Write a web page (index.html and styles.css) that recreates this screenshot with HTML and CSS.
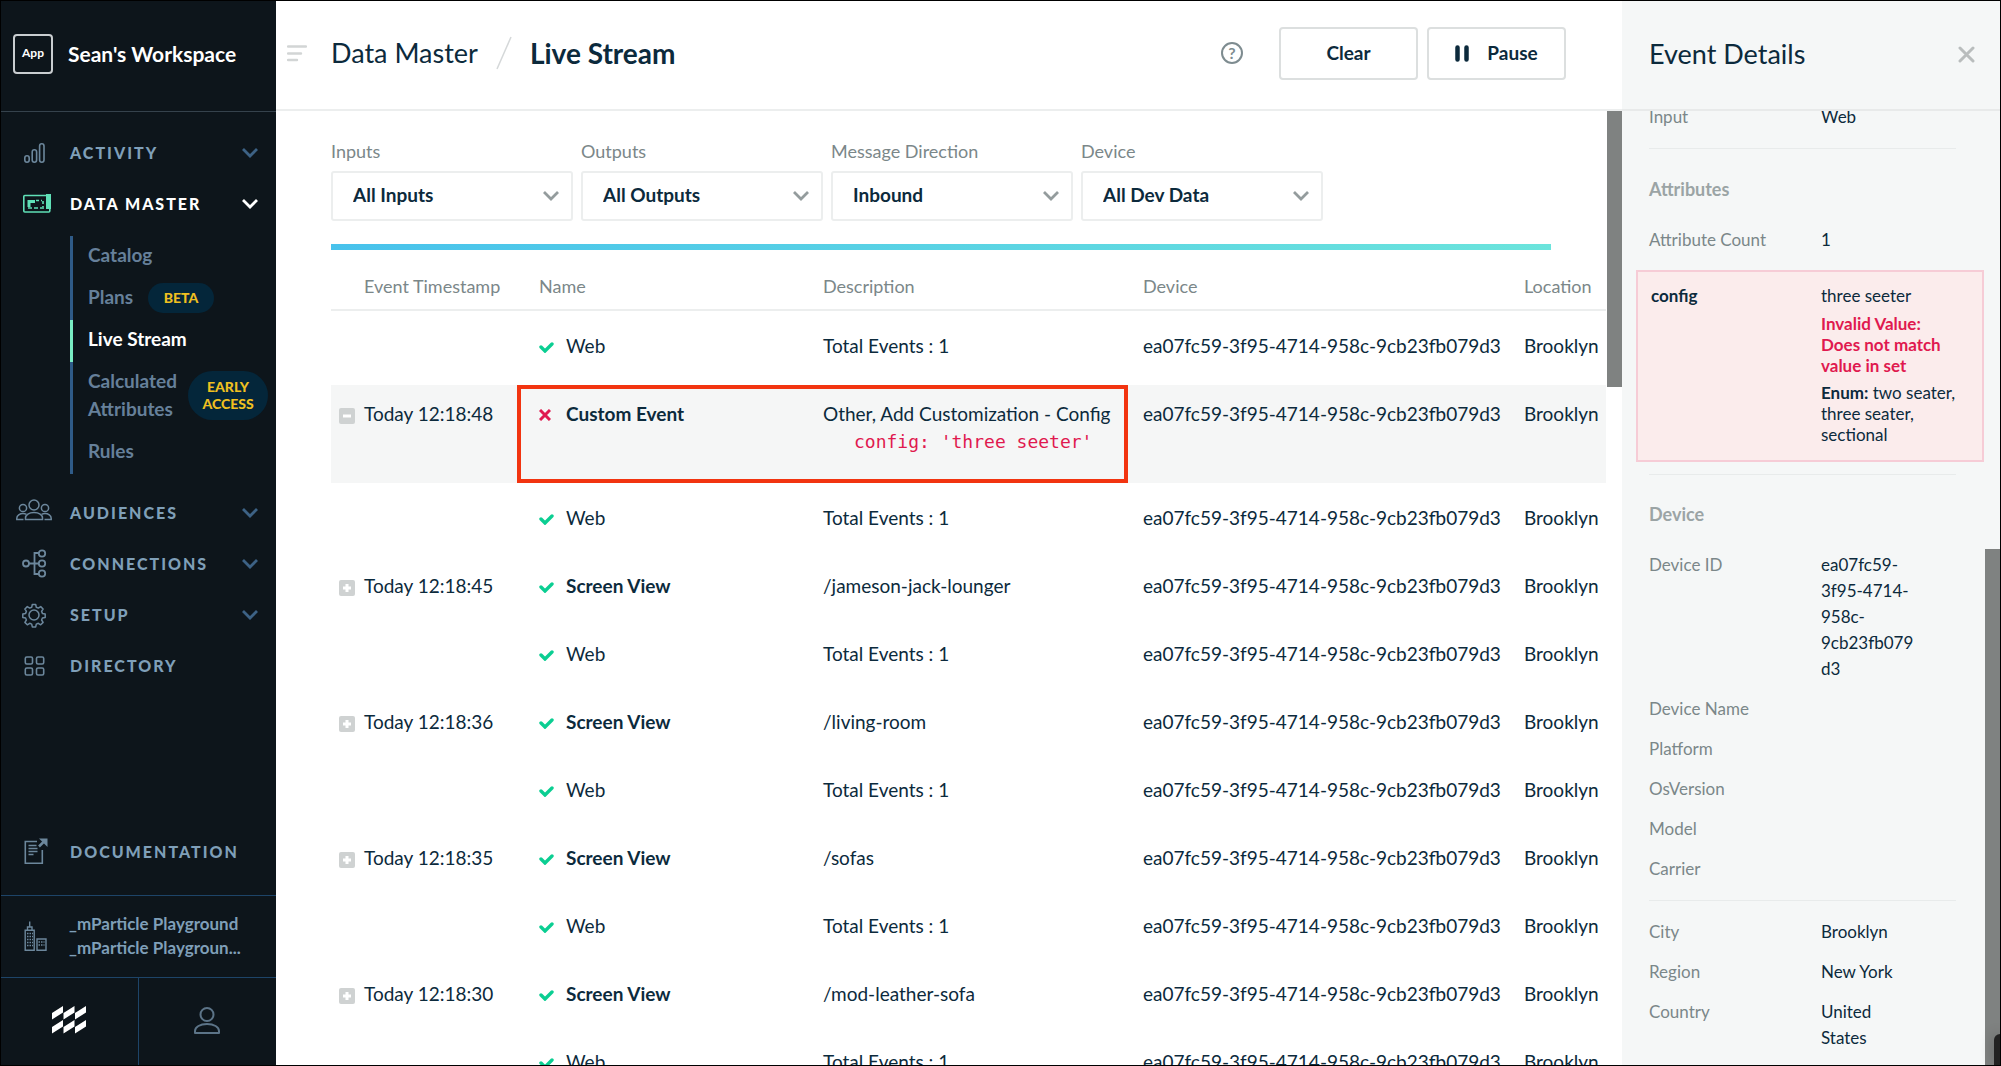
FILE: index.html
```
<!DOCTYPE html>
<html lang="en">
  <head>
    <meta charset="utf-8">
    <title>Live Stream</title>
    <link rel="stylesheet" href="styles.css">
  </head>
<body>
  <!--Shared icons-->
  <svg class="defs" width="0" height="0">
    <symbol id="chevron" viewBox="0 0 18 12"><path d="M2 2l7 7 7-7" fill="none" stroke="currentColor" stroke-width="2.8"/></symbol>
    <symbol id="check" viewBox="0 0 15 12"><path d="M2 6l4 4 7-7" fill="none" stroke="currentColor" stroke-width="3.4" stroke-linecap="round"/></symbol>
    <symbol id="cross" viewBox="0 0 12 12"><path d="M1 1l10 10M11 1L1 11" fill="none" stroke="currentColor" stroke-width="3"/></symbol>
    <symbol id="plus" viewBox="0 0 16 16"><path d="M8 4v8M4 8h8" fill="none" stroke="currentColor" stroke-width="3"/></symbol>
    <symbol id="minus" viewBox="0 0 16 16"><path d="M4 8h8" fill="none" stroke="currentColor" stroke-width="3"/></symbol>
  </svg>

  <aside class="sidebar">
    <div class="brand">
      <span class="app">App</span>
      <span class="workspace">Sean's Workspace</span>
    </div>
    <nav class="nav">
      <a class="item" href="#">
        <svg class="icon" width="36" height="30" viewBox="0 0 36 30"><g fill="none" stroke="currentColor" stroke-width="1.6"><rect x="8.8" y="17.8" width="4.4" height="6.4" rx="2.2"/><rect x="16.2" y="11.8" width="4.4" height="12.4" rx="2.2"/><rect x="23.6" y="5.8" width="4.4" height="18.4" rx="2.2"/></g></svg>
        <span>ACTIVITY</span>
        <svg class="arrow" width="18" height="12"><use href="#chevron"/></svg>
      </a>
      <a class="item open" href="#">
        <svg class="icon" width="36" height="30" viewBox="0 0 36 30"><g fill="none" stroke="#5fe0b7"><rect x="7.8" y="6.5" width="26" height="16.500" rx="1" stroke-width="1.6"/><path d="M13 18v-5.500h6" stroke-width="3"/><path d="M12 19h16" stroke-width="1.600" stroke-dasharray="4 2"/><path d="M20 11.500h6M27 12v6" stroke-width="1.600" stroke-dasharray="3 2"/></g><path d="M30 5h5v15h-5z" fill="#5fe0b7"/></svg>
        <span>DATA MASTER</span>
        <svg class="arrow" width="18" height="12"><use href="#chevron"/></svg>
      </a>
      <div class="submenu">
        <a href="#">Catalog</a>
        <a href="#">Plans <span class="badge beta">BETA</span></a>
        <a class="active" href="#">Live Stream</a>
        <a href="#">Calculated<br>Attributes <span class="badge early">EARLY ACCESS</span></a>
        <a href="#">Rules</a>
      </div>
      <a class="item" href="#">
        <svg class="icon" width="36" height="30" viewBox="0 0 36 30"><g fill="none" stroke="currentColor" stroke-width="1.5"><circle cx="18" cy="7" r="5"/><circle cx="7" cy="10" r="3.600"/><circle cx="29" cy="10" r="3.600"/><path d="M9.500 21.500v-1.500c0-3 3.500-5.500 8.500-5.500s8.500 2.500 8.500 5.500v1.500z"/><path d="M7.500 21.500H.8v-1.300c0-2.700 3-4.700 6.200-4.700 1.400 0 2.500.3 3.500.8M28.500 21.500h6.700v-1.300c0-2.700-3-4.700-6.200-4.700-1.400 0-2.500.3-3.500.8"/></g></svg>
        <span>AUDIENCES</span>
        <svg class="arrow" width="18" height="12"><use href="#chevron"/></svg>
      </a>
      <a class="item" href="#">
        <svg class="icon" width="36" height="30" viewBox="0 0 36 30"><g fill="none" stroke="currentColor" stroke-width="1.8"><circle cx="10" cy="14.500" r="3"/><circle cx="26" cy="4.500" r="3.200"/><circle cx="26" cy="14.500" r="3.200"/><circle cx="26" cy="24.500" r="3.200"/><path d="M13 14.500h10M23 4h-4.500v21h4.500"/></g></svg>
        <span>CONNECTIONS</span>
        <svg class="arrow" width="18" height="12"><use href="#chevron"/></svg>
      </a>
      <a class="item" href="#">
        <svg class="icon" width="36" height="30" viewBox="0 0 36 30"><g fill="none" stroke="currentColor" stroke-width="1.5"><circle cx="18" cy="15" r="5"/><path stroke-linejoin="round" d="M16.300 4.500h3.400l.6 2.800 2 .8 2.400-1.500 2.400 2.400-1.500 2.400.8 2 2.800.6v3.400l-2.800.6-.8 2 1.500 2.400-2.400 2.400-2.400-1.500-2 .8-.6 2.800h-3.400l-.6-2.800-2-.8-2.400 1.500-2.400-2.400 1.500-2.400-.8-2-2.800-.6v-3.400l2.800-.6.8-2-1.500-2.400 2.400-2.400 2.400 1.500 2-.8z"/></g></svg>
        <span>SETUP</span>
        <svg class="arrow" width="18" height="12"><use href="#chevron"/></svg>
      </a>
      <a class="item" href="#">
        <svg class="icon" width="36" height="30" viewBox="0 0 36 30"><g fill="none" stroke="currentColor" stroke-width="1.6"><rect x="9.300" y="6" width="7.200" height="7" rx="1.500"/><rect x="20.500" y="6" width="7.200" height="7" rx="1.500"/><rect x="9.300" y="17" width="7.200" height="7" rx="1.500"/><rect x="20.500" y="17" width="7.200" height="7" rx="1.500"/></g></svg>
        <span>DIRECTORY</span>
      </a>
    </nav>
    <a class="item docs" href="#">
      <svg class="icon" width="36" height="30" viewBox="0 0 36 30"><g fill="none" stroke="currentColor" stroke-width="1.600"><path d="M21 4.500H9.300v21.700h17V13"/><path d="M12.500 8.500h8M12.500 11.500h9M12.500 14.500h9M12.500 17.500h5"/><path d="M23 9.500l5-5" stroke-width="2.500"/></g><path d="M23 1.500h8.500v8.500z" fill="currentColor"/></svg>
      <span>DOCUMENTATION</span>
    </a>
    <a class="account" href="#">
      <svg class="icon" width="36" height="32" viewBox="0 0 36 32"><g fill="none" stroke="currentColor" stroke-width="1.400"><path d="M9.200 30.300v-20h9v20zM21 30.300V19h9v11.300zM11.500 10v-3h4.500v3M13.700 7V1.500"/><path d="M11 13.500h6M11 16.500h6M11 19.500h6M11 22.500h6M11 25.500h6M22.500 22h6M22.500 25h6" stroke-dasharray="1.500 1"/></g></svg>
      <span class="names"><span>_mParticle Playground</span><span>_mParticle Playgroun...</span></span>
    </a>
    <div class="bottom">
      <a href="#" aria-label="Home">
        <svg width="36" height="30" viewBox="0 0 36 30"><path fill="#fff" d="M1 8L12 1v6.500L1 14.500zM12.500 8L23.500 1v6.500l-11 7zM24 8L35 1v6.500l-11 7zM1 22L12 15v6.500L1 28.500zM12.500 22L23.500 15v6.500l-11 7zM24 22L35 15v6.500l-11 7z"/></svg>
      </a>
      <a href="#" aria-label="Profile">
        <svg width="28" height="30" viewBox="0 0 28 30"><g fill="none" stroke="#5c7488" stroke-width="2"><circle cx="14" cy="9.500" r="6.500"/><path d="M2 28v-2c0-4 5-7 12-7s12 3 12 7v2z" stroke-linejoin="round"/></g></svg>
      </a>
    </div>
  </aside>

  <main class="main">
    <header class="header">
      <svg class="menu" width="20" height="18" viewBox="0 0 20 18"><path d="M1 2.500h18M1 9.500h13M1 16h9" stroke="#d2d5d5" stroke-width="2.400" stroke-linecap="round"/></svg>
      <h1 class="title">Data Master</h1>
      <svg class="slash" width="16" height="34" viewBox="0 0 16 34"><path d="M15 1L1 33" stroke="#d5d8d9" stroke-width="1.500"/></svg>
      <h1 class="title current">Live Stream</h1>
      <span class="help">?</span>
      <button class="btn">Clear</button>
      <button class="btn"><svg width="14" height="17" viewBox="0 0 14 17"><path d="M2.500 2.500v12M11.500 2.500v12" stroke="currentColor" stroke-width="4.500" stroke-linecap="round"/></svg>Pause</button>
    </header>

    <div class="content">
      <form class="filters">
        <div class="filter">
          <label for="inputs">Inputs</label>
          <select id="inputs"><option>All Inputs</option></select>
          <svg class="drop" width="18" height="12"><use href="#chevron"/></svg>
        </div>
        <div class="filter">
          <label for="outputs">Outputs</label>
          <select id="outputs"><option>All Outputs</option></select>
          <svg class="drop" width="18" height="12"><use href="#chevron"/></svg>
        </div>
        <div class="filter">
          <label for="direction">Message Direction</label>
          <select id="direction"><option>Inbound</option></select>
          <svg class="drop" width="18" height="12"><use href="#chevron"/></svg>
        </div>
        <div class="filter">
          <label for="device">Device</label>
          <select id="device"><option>All Dev Data</option></select>
          <svg class="drop" width="18" height="12"><use href="#chevron"/></svg>
        </div>
      </form>
      <div class="progress"></div>

      <table class="events">
        <thead>
          <tr><th class="time">Event Timestamp</th><th class="name">Name</th><th class="desc">Description</th><th class="dev">Device</th><th class="loc">Location</th></tr>
        </thead>
        <tbody>
          <tr class="child"><td></td><td><svg class="ok" width="15" height="12"><use href="#check"/></svg>Web</td><td>Total Events : 1</td><td>ea07fc59-3f95-4714-958c-9cb23fb079d3</td><td>Brooklyn</td></tr>
          <tr class="invalid"><td><button class="toggle" aria-label="Collapse"><svg width="16" height="16"><use href="#minus"/></svg></button>Today 12:18:48</td><td><svg class="bad" width="12" height="12"><use href="#cross"/></svg><b>Custom Event</b></td><td>Other, Add Customization - Config<code>config: 'three seeter'</code></td><td>ea07fc59-3f95-4714-958c-9cb23fb079d3</td><td>Brooklyn</td></tr>
          <tr class="child"><td></td><td><svg class="ok" width="15" height="12"><use href="#check"/></svg>Web</td><td>Total Events : 1</td><td>ea07fc59-3f95-4714-958c-9cb23fb079d3</td><td>Brooklyn</td></tr>
          <tr><td><button class="toggle" aria-label="Expand"><svg width="16" height="16"><use href="#plus"/></svg></button>Today 12:18:45</td><td><svg class="ok" width="15" height="12"><use href="#check"/></svg><b>Screen View</b></td><td>/jameson-jack-lounger</td><td>ea07fc59-3f95-4714-958c-9cb23fb079d3</td><td>Brooklyn</td></tr>
          <tr class="child"><td></td><td><svg class="ok" width="15" height="12"><use href="#check"/></svg>Web</td><td>Total Events : 1</td><td>ea07fc59-3f95-4714-958c-9cb23fb079d3</td><td>Brooklyn</td></tr>
          <tr><td><button class="toggle" aria-label="Expand"><svg width="16" height="16"><use href="#plus"/></svg></button>Today 12:18:36</td><td><svg class="ok" width="15" height="12"><use href="#check"/></svg><b>Screen View</b></td><td>/living-room</td><td>ea07fc59-3f95-4714-958c-9cb23fb079d3</td><td>Brooklyn</td></tr>
          <tr class="child"><td></td><td><svg class="ok" width="15" height="12"><use href="#check"/></svg>Web</td><td>Total Events : 1</td><td>ea07fc59-3f95-4714-958c-9cb23fb079d3</td><td>Brooklyn</td></tr>
          <tr><td><button class="toggle" aria-label="Expand"><svg width="16" height="16"><use href="#plus"/></svg></button>Today 12:18:35</td><td><svg class="ok" width="15" height="12"><use href="#check"/></svg><b>Screen View</b></td><td>/sofas</td><td>ea07fc59-3f95-4714-958c-9cb23fb079d3</td><td>Brooklyn</td></tr>
          <tr class="child"><td></td><td><svg class="ok" width="15" height="12"><use href="#check"/></svg>Web</td><td>Total Events : 1</td><td>ea07fc59-3f95-4714-958c-9cb23fb079d3</td><td>Brooklyn</td></tr>
          <tr><td><button class="toggle" aria-label="Expand"><svg width="16" height="16"><use href="#plus"/></svg></button>Today 12:18:30</td><td><svg class="ok" width="15" height="12"><use href="#check"/></svg><b>Screen View</b></td><td>/mod-leather-sofa</td><td>ea07fc59-3f95-4714-958c-9cb23fb079d3</td><td>Brooklyn</td></tr>
          <tr class="child"><td></td><td><svg class="ok" width="15" height="12"><use href="#check"/></svg>Web</td><td>Total Events : 1</td><td>ea07fc59-3f95-4714-958c-9cb23fb079d3</td><td>Brooklyn</td></tr>
        </tbody>
      </table>
      <div class="scrollbar top"></div>
    </div>
  </main>

  <aside class="details">
    <header class="details-header">
      <h2 class="title">Event Details</h2>
      <button class="close" aria-label="Close"><svg width="17" height="17" viewBox="0 0 17 17"><path d="M2 2l13 13M15 2L2 15" stroke="#b9bdbd" stroke-width="3" stroke-linecap="round"/></svg></button>
    </header>
    <div class="details-body">
      <dl class="group first">
        <dt>Input</dt><dd>Web</dd>
      </dl>
      <h3>Attributes</h3>
      <dl class="group">
        <dt>Attribute Count</dt><dd>1</dd>
      </dl>
      <dl class="error">
        <dt>config</dt>
        <dd>three seeter
          <p class="invalid-value">Invalid Value: Does not match value in set</p>
          <p><b>Enum:</b> two seater, three seater, sectional</p>
        </dd>
      </dl>
      <h3 class="ruled">Device</h3>
      <dl class="group">
        <dt>Device ID</dt><dd>ea07fc59-3f95-4714-958c-9cb23fb079d3</dd>
        <dt>Device Name</dt><dd></dd>
        <dt>Platform</dt><dd></dd>
        <dt>OsVersion</dt><dd></dd>
        <dt>Model</dt><dd></dd>
        <dt>Carrier</dt><dd></dd>
      </dl>
      <dl class="group place">
        <dt>City</dt><dd>Brooklyn</dd>
        <dt>Region</dt><dd>New York</dd>
        <dt>Country</dt><dd>United States</dd>
      </dl>
      <div class="scrollbar low"></div>
      <div class="corner"></div>
    </div>
  </aside>
</body>
</html>
```

FILE: styles.css
```
* {
  box-sizing: border-box;
}
body {
  margin: 0;
  height: 100vh;
  display: flex;
  overflow: hidden;
  border: 1px solid #000;
  background-color: #fff;
  color: #0c2a3c;
  font-family: Lato, "Liberation Sans", sans-serif;
  font-size: 19px;
  line-height: 28px;
}
a {
  color: inherit;
  text-decoration: none;
}
h1, h2, h3, p, dl, dd {
  margin: 0;
}
button, select {
  font: inherit;
  color: inherit;
}
.defs {
  position: absolute;
}

/* sidebar */
.sidebar {
  width: 275px;
  flex-shrink: 0;
  display: flex;
  flex-direction: column;
  background-color: #0d151b;
  color: #7f9fb8;
  font-weight: bold;
}
.brand {
  height: 111px;
  padding: 0 12px 5px;
  display: flex;
  align-items: center;
  gap: 15px;
  flex-shrink: 0;
  border-bottom: 1px solid #35424c;
  color: #fff;
  font-size: 21px;
}
.app {
  width: 40px;
  height: 40px;
  border: 2px solid #c9cdd0;
  border-radius: 4px;
  font-size: 12px;
  line-height: 34px;
  text-align: center;
}
.nav {
  flex: 1;
  padding-top: 15px;
}
.item {
  height: 51px;
  padding: 0 17px 0 15px;
  display: flex;
  align-items: center;
  gap: 18px;
  font-size: 16px;
  font-weight: 900;
  letter-spacing: 2px;
}
.icon {
  flex-shrink: 0;
  color: #6c879c;
}
.arrow {
  margin-left: auto;
  color: #3d6285;
}
.open, .open .arrow {
  color: #fff;
}
.submenu {
  margin: 7px 0 13px 69px;
  color: #66809a;
}
.submenu a {
  position: relative;
  display: block;
  padding: 5px 0 9px 15px;
  border-left: 3px solid #2f5b88;
  font-size: 19px;
}
.submenu .active {
  border-left-color: #79ecc4;
  color: #fff;
}
.badge {
  position: absolute;
  border-radius: 25px;
  background-color: #04263a;
  color: #f0c020;
  font-size: 14px;
  font-weight: 900;
  text-align: center;
}
.beta {
  top: 5px;
  left: 75px;
  width: 66px;
  line-height: 30px;
}
.early {
  top: 9px;
  left: 115px;
  width: 80px;
  padding: 7px 10px 8px;
  line-height: 17px;
}
.docs {
  margin-bottom: 18px;
}
.account {
  height: 82px;
  padding: 0 15px 2px;
  display: flex;
  align-items: center;
  gap: 17px;
  flex-shrink: 0;
  border-top: 1px solid #1d4468;
  font-size: 17px;
  line-height: 24px;
}
.names span {
  display: block;
  white-space: nowrap;
}
.bottom {
  height: 88px;
  display: flex;
  flex-shrink: 0;
  border-top: 1px solid #1d4468;
}
.bottom a {
  flex: 1;
  display: flex;
  align-items: center;
  justify-content: center;
  padding: 0 2px 4px 0;
}
.bottom a + a {
  border-left: 1px solid #1d4468;
}

/* main area */
.main {
  flex: 1;
  min-width: 0;
  display: flex;
  flex-direction: column;
}
.header {
  height: 110px;
  padding: 0 56px 4px 11px;
  display: flex;
  align-items: center;
  flex-shrink: 0;
  border-bottom: 2px solid #eceeee;
}
.title {
  font-size: 27px;
  font-weight: normal;
  line-height: 32px;
  white-space: nowrap;
}
.menu {
  margin-right: 24px;
}
.slash {
  margin: 0 18px;
}
.current {
  font-size: 28px;
  font-weight: bold;
}
.help {
  width: 22px;
  height: 22px;
  margin-left: auto;
  margin-right: 36px;
  border: 2px solid #7e8c90;
  border-radius: 50%;
  color: #7e8c90;
  font-size: 16px;
  font-weight: bold;
  line-height: 18px;
  text-align: center;
}
.btn {
  width: 139px;
  height: 53px;
  display: flex;
  align-items: center;
  justify-content: center;
  gap: 18px;
  border: 2px solid #dcdfdf;
  border-radius: 4px;
  background-color: #fff;
  font-weight: bold;
}
.btn + .btn {
  margin-left: 9px;
}
.content {
  position: relative;
  flex: 1;
  overflow: hidden;
  padding: 26px 16px 0 55px;
}
.filters {
  display: flex;
  gap: 8px;
}
.filter {
  position: relative;
  width: 242px;
}
.filter label {
  display: block;
  margin-bottom: 6px;
  color: #7b8789;
  font-size: 18px;
}
.filter select {
  width: 100%;
  height: 50px;
  padding: 0 20px 2px;
  appearance: none;
  border: 2px solid #eceeee;
  border-radius: 3px;
  background-color: #fff;
  font-weight: bold;
}
.drop {
  position: absolute;
  right: 13px;
  bottom: 19px;
  color: #949c9d;
  pointer-events: none;
}
.progress {
  height: 6px;
  margin: 23px 55px 0 0;
  background: linear-gradient(to right, #48c2ec, #6be4dc);
}
.events {
  width: 100%;
  table-layout: fixed;
  border-spacing: 0;
}
.events th {
  height: 61px;
  padding: 22px 0 0 22px;
  border-bottom: 2px solid #eceeee;
  color: #7b8789;
  font-size: 18px;
  font-weight: normal;
  line-height: 28px;
  text-align: left;
  vertical-align: top;
  white-space: nowrap;
}
.events td {
  padding: 15px 0 19px 22px;
  height: 62px;
  vertical-align: top;
  white-space: nowrap;
}
.events .child td {
  padding-top: 21px;
  height: 74px;
}
.events th:first-child, .events td:first-child {
  padding-left: 33px;
}
.events th:nth-child(n+4), .events td:nth-child(n+4) {
  padding-left: 15px;
}
.time {
  width: 186px;
}
.name {
  width: 284px;
}
.desc {
  width: 327px;
}
.dev {
  width: 381px;
}
.events .invalid td {
  height: 98px;
  background-color: #f5f6f6;
}
/* red frame around the name and description of a rejected event */
.events .invalid td:nth-child(2), .events .invalid td:nth-child(3) {
  padding-top: 11px;
  border: 4px solid #f23410;
}
.events .invalid td:nth-child(2) {
  padding-left: 18px;
  border-right: 0;
}
.events .invalid td:nth-child(3) {
  border-left: 0;
}
.events code {
  display: block;
  padding-left: 31px;
  color: #e0194f;
  font-family: "DejaVu Sans Mono", monospace;
  font-size: 18px;
}
.ok {
  margin-right: 12px;
  color: #0bce92;
}
.bad {
  margin-right: 15px;
  color: #e0194f;
}
.toggle {
  width: 16px;
  height: 16px;
  margin: 8px 9px 0 -25px;
  padding: 0;
  float: left;
  border: 0;
  border-radius: 2px;
  background-color: #cfd2d2;
  color: #fff;
  line-height: 0;
}
.scrollbar {
  position: absolute;
  right: 0;
  width: 15px;
  background-color: #7f8281;
}
.top {
  top: 0;
  height: 276px;
}
.low {
  bottom: 0;
  height: 516px;
}
.corner {
  position: absolute;
  right: 0;
  bottom: 0;
  width: 6px;
  height: 31px;
  border-top-left-radius: 6px;
  background-color: #222;
  box-shadow: 0 0 14px rgba(0, 0, 0, 0.3);
}

/* event details */
.details {
  width: 378px;
  flex-shrink: 0;
  display: flex;
  flex-direction: column;
  background-color: #f5f7f7;
  font-size: 17px;
  line-height: 26px;
}
.details-header {
  height: 110px;
  padding: 0 25px 2px 27px;
  display: flex;
  align-items: center;
  justify-content: space-between;
  flex-shrink: 0;
  border-bottom: 2px solid #e8eaea;
}
.close {
  padding: 0;
  border: 0;
  background: none;
  line-height: 0;
}
.details-body {
  position: relative;
  flex: 1;
  overflow: hidden;
  padding: 0 44px 0 27px;
}
.details dt {
  color: #7b8789;
}
.group {
  display: grid;
  grid-template-columns: 172px 100px;
  row-gap: 14px;
}
.group dd {
  overflow-wrap: anywhere;
}
/* the list is scrolled, so its first row sits partly under the header */
.first {
  margin-top: -7px;
  padding-bottom: 18px;
  border-bottom: 1px solid #e8ebeb;
}
.details h3 {
  padding: 27px 0 25px;
  color: #9ba4a5;
  font-size: 18px;
  line-height: 26px;
}
.error {
  margin: 17px -28px 0 -13px;
  padding: 11px 20px 15px 13px;
  display: grid;
  grid-template-columns: 170px 1fr;
  border: 2px solid #f6ccd6;
  background-color: #fbecec;
}
.error dt {
  color: #0c2a3c;
  font-weight: bold;
}
.error p {
  margin-top: 6px;
  line-height: 21px;
}
.error .invalid-value {
  margin-top: 4px;
  color: #e0194f;
  font-weight: bold;
}
.details .ruled {
  margin-top: 12px;
  padding: 26px 0 25px;
  border-top: 1px solid #e8ebeb;
}
.place {
  margin-top: 18px;
  padding-top: 18px;
  border-top: 1px solid #e8ebeb;
}
```
